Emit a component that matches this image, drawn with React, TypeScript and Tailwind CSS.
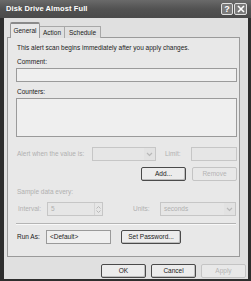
import React from "react";

const font = { fontFamily: '"Liberation Sans", Arial, sans-serif' };

function Btn({ label, w, disabled, cls = "" }: { label: string; w: string; disabled?: boolean; cls?: string }) {
  return (
    <div
      className={`${w} h-[14px] flex items-center justify-center rounded-[2px] border text-[6.5px] ${
        disabled ? "border-[#c4c4c4] text-[#b4b4b4] bg-[#e8e8e8]" : "border-[#4a4a4a] text-[#1a1a1a] bg-[#ececec] shadow-[inset_-1px_-1px_0_#bdbdbd]"
      } ${cls}`}
    >
      {label}
    </div>
  );
}

function Combo({ w, text }: { w: string; text?: string }) {
  return (
    <div className={`${w} h-[14px] border border-[#c6c6c6] bg-[#e6e6e6] flex items-center justify-between pl-[3px]`}>
      <span className="text-[6.5px] text-[#b0b0b0]">{text}</span>
      <div className="w-[11px] h-[12px] flex items-center justify-center bg-[#e2e2e2]">
        <svg width="7" height="5" viewBox="0 0 7 5">
          <path d="M1 1 L3.5 3.5 L6 1" stroke="#b8b8b8" strokeWidth="1.2" fill="none" />
        </svg>
      </div>
    </div>
  );
}

export default function App() {
  return (
    <div className="w-[251px] h-[281px] bg-[#2e2e2e] flex flex-col overflow-hidden" style={font}>
      {/* Title bar */}
      <div className="h-[18px] shrink-0 bg-gradient-to-b from-[#6a6a6a] via-[#525252] to-[#4a4a4a] flex items-center pl-[6px] pr-[4px]">
        <span className="text-white font-bold text-[7.5px] tracking-[0.1px]">Disk Drive Almost Full</span>
        <div className="ml-auto flex gap-[1px]">
          <div className="w-[12px] h-[12px] rounded-[2px] border border-[#e0e0e0] bg-[#7a7a7a] flex items-center justify-center text-white font-bold text-[9px] leading-none">?</div>
          <div className="w-[13px] h-[12px] rounded-[2px] border border-[#e0e0e0] bg-[#7a7a7a] flex items-center justify-center">
            <svg width="8" height="8" viewBox="0 0 8 8">
              <path d="M1 1 L7 7 M7 1 L1 7" stroke="white" strokeWidth="1.6" />
            </svg>
          </div>
        </div>
      </div>

      {/* Body */}
      <div className="flex-1 ml-[4px] mr-[3px] mb-[2px] bg-[#e0e0e0] flex flex-col pl-[3px] pr-[5px]">
        {/* Tabs */}
        <div className="flex items-end mt-[4px] h-[16px] pl-[3px] relative z-10">
          <div className="h-[16px] w-[30px] border border-b-0 border-[#9a9a9a] bg-[#e8e8e8] rounded-t-[2px] flex items-center justify-center text-[6.5px] text-[#1a1a1a] border-t-2 border-t-[#8a8a8a]">General</div>
          <div className="h-[12px] w-[25px] border border-b-0 border-l-0 border-[#a8a8a8] bg-[#e0e0e0] flex items-center justify-center text-[6.5px] text-[#1a1a1a]">Action</div>
          <div className="h-[12px] w-[36px] border border-b-0 border-l-0 border-[#a8a8a8] bg-[#e0e0e0] flex items-center justify-center text-[6.5px] text-[#1a1a1a]">Schedule</div>
        </div>

        {/* Panel */}
        <div className="h-[220px] -mt-[1px] mr-[3px] border border-[#9a9a9a] bg-[#e8e8e8] flex flex-col pl-[8px] pr-[2px] text-[6.5px] text-[#1a1a1a] leading-[10px]">
          <div className="mt-[5px] h-[10px] pl-[1px]">This alert scan begins immediately after you apply changes.</div>
          <div className="mt-[4px] h-[10px] pl-[1px]">Comment:</div>
          <div className="mt-[1px] h-[14px] border border-[#9a9a9a] bg-[#efefef]" />
          <div className="mt-[5px] h-[10px] pl-[1px]">Counters:</div>
          <div className="mt-[1px] h-[39px] border border-[#9a9a9a] bg-[#efefef]" />

          <div className="mt-[10px] h-[14px] flex items-center text-[#b0b0b0]">
            <span className="w-[76px] pl-[1px]">Alert when the value is:</span>
            <Combo w="w-[64px]" />
            <span className="ml-[9px]">Limit:</span>
            <div className="ml-auto w-[46px] h-[14px] border border-[#c6c6c6] bg-[#e6e6e6]" />
          </div>

          <div className="mt-[6px] h-[14px] flex justify-end gap-[6px]">
            <Btn label="Add..." w="w-[45px]" />
            <Btn label="Remove" w="w-[45px]" disabled />
          </div>

          <div className="mt-[6px] h-[10px] pl-[1px] text-[#b0b0b0]">Sample data every:</div>

          <div className="mt-[5px] h-[14px] flex items-center text-[#b0b0b0]">
            <span className="w-[31px] pl-[2px]">Interval:</span>
            <div className="w-[56px] h-[14px] border border-[#c6c6c6] bg-[#e6e6e6] flex items-center justify-between pl-[3px]">
              <span>5</span>
              <div className="w-[8px] h-[12px] flex flex-col items-center justify-center gap-[1px] border-l border-[#d4d4d4]">
                <svg width="5" height="3" viewBox="0 0 5 3"><path d="M0.5 2.5 L2.5 0.5 L4.5 2.5" stroke="#b8b8b8" fill="none" /></svg>
                <svg width="5" height="3" viewBox="0 0 5 3"><path d="M0.5 0.5 L2.5 2.5 L4.5 0.5" stroke="#b8b8b8" fill="none" /></svg>
              </div>
            </div>
            <span className="ml-[30px] w-[27px]">Units:</span>
            <Combo w="w-[76px]" text="seconds" />
          </div>

          <div className="mt-[7px] h-[1px] bg-[#b4b4b4] mr-[1px] shadow-[0_1px_0_#f8f8f8]" />

          <div className="mt-[6px] h-[14px] flex items-center">
            <span className="w-[30px] pl-[1px]">Run As:</span>
            <div className="w-[65px] h-[14px] border border-[#9a9a9a] bg-[#efefef] flex items-center pl-[3px]">&lt;Default&gt;</div>
            <Btn label="Set Password..." w="w-[60px]" cls="ml-[10px]" />
          </div>
        </div>

        {/* Bottom buttons */}
        <div className="mt-[7px] flex justify-end gap-[5px] mr-[-3px]">
          <Btn label="OK" w="w-[45px]" />
          <Btn label="Cancel" w="w-[45px]" />
          <Btn label="Apply" w="w-[45px]" disabled />
        </div>
      </div>
    </div>
  );
}
